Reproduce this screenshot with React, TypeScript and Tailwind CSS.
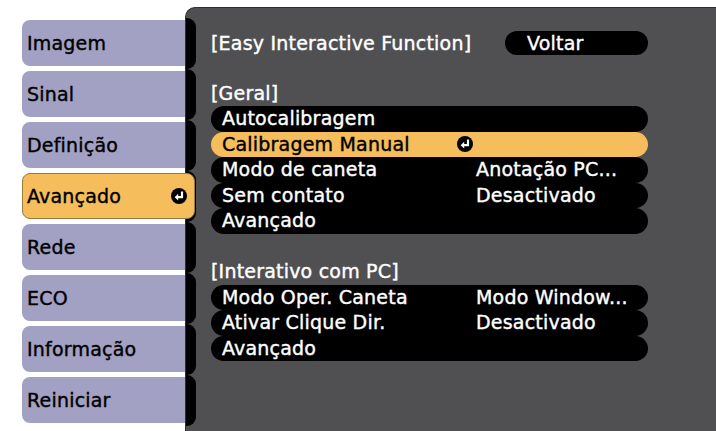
import React from "react";

const tabs = ["Imagem", "Sinal", "Definição", "Avançado", "Rede", "ECO", "Informação", "Reiniciar"];

const geral = [
  { label: "Autocalibragem", value: "" },
  { label: "Calibragem Manual", value: "", active: true },
  { label: "Modo de caneta", value: "Anotação PC..." },
  { label: "Sem contato", value: "Desactivado" },
  { label: "Avançado", value: "" },
];

const interativo = [
  { label: "Modo Oper. Caneta", value: "Modo Window..." },
  { label: "Ativar Clique Dir.", value: "Desactivado" },
  { label: "Avançado", value: "" },
];

function EnterIcon() {
  return (
    <svg width="16" height="16" viewBox="0 0 16 16" className="shrink-0">
      <circle cx="8" cy="8" r="8" fill="#000" />
      <path d="M11 3.5 V9.2 H6.5" stroke="#fff" strokeWidth="2.2" fill="none" />
      <path d="M3.6 9.2 L7.2 5.8 V12.6 Z" fill="#fff" />
    </svg>
  );
}

type Row = { label: string; value: string; active?: boolean };

function MenuRow({ row }: { row: Row }) {
  return (
    <div
      className={`h-[25.5px] rounded-full flex items-center pl-[11px] ${
        row.active ? "bg-[#f5bd5b] text-black" : "bg-black text-white"
      }`}
    >
      <div className="w-[254px] pr-[3px] flex items-center justify-between">
        <span>{row.label}</span>
        {row.active && <EnterIcon />}
      </div>
      <span>{row.value}</span>
    </div>
  );
}

export default function App() {
  return (
    <div className="w-[716px] h-[431px] bg-white flex overflow-hidden font-['DejaVu_Sans',sans-serif] text-[19px] leading-none tracking-[0.2px] [-webkit-text-stroke:0.4px]">
      {/* Tabs */}
      <div className="w-[185px] shrink-0 pl-[22px] pt-[20px] flex flex-col gap-[5px]">
        {tabs.map((t) =>
          t === "Avançado" ? (
            <div
              key={t}
              className="relative z-10 w-[173px] h-[46px] rounded-[8px] bg-[#f5bd5b] border border-[#9a7a3c] flex items-center justify-between pl-[4px] pr-[7px] text-black"
            >
              <span>{t}</span>
              <EnterIcon />
            </div>
          ) : (
            <div
              key={t}
              className="w-[163px] h-[46px] rounded-l-[8px] bg-[#a2a1c4] flex items-center pl-[5px] text-black"
            >
              {t}
            </div>
          )
        )}
      </div>

      {/* Panel */}
      <div className="flex-1 mt-[7px] bg-[#505053] rounded-tl-[10px] border-t border-l border-[#2e2e30] flex">
        <div className="w-[10px] pt-[10px] flex flex-col shrink-0">
          {tabs.map((t) => (
            <div key={t} className="h-[51px] bg-black rounded-r-[9px]" />
          ))}
        </div>

        <div className="pl-[15px] pt-[23px] w-[452px] text-white">
          <div className="h-[24px] flex items-center">
            <span>[Easy Interactive Function]</span>
            <div className="ml-auto w-[143px] h-[24px] rounded-full bg-black flex items-center pl-[22px]">
              Voltar
            </div>
          </div>

          <div className="mt-[25px] h-[26px] flex items-center">[Geral]</div>
          <div className="flex flex-col">
            {geral.map((r, i) => (
              <MenuRow key={i} row={r} />
            ))}
          </div>

          <div className="mt-[25px] h-[26px] flex items-center">[Interativo com PC]</div>
          <div className="flex flex-col">
            {interativo.map((r, i) => (
              <MenuRow key={i} row={r} />
            ))}
          </div>
        </div>
      </div>
    </div>
  );
}
